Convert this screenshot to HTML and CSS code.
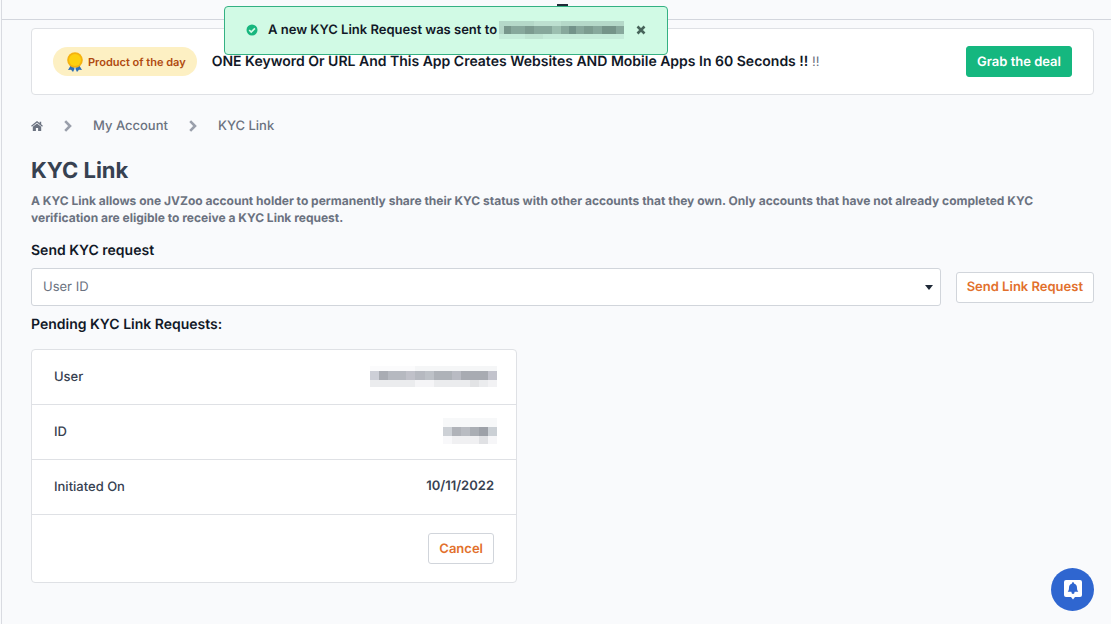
FILE: index.html
```html
<!DOCTYPE html>
<html lang="en">
<head>
    <meta charset="UTF-8">
    <meta name="viewport" content="width=device-width, initial-scale=1.0">
    <title>KYC Link</title>
    <link rel="stylesheet" href="styles.css">
</head>
<body>

    <div class="page">
        <header class="topbar">
            <span class="topbar-handle"></span>
        </header>

        <main class="content">
            <section class="promo">
                <span class="promo-badge">
                    <svg class="medal" width="18" height="20" viewBox="0 0 18 20" aria-hidden="true">
                        <path d="M5 13 L2 18 L5 17.700 L7 20 L9 16 L11 20 L13 17.700 L16 18 L13 13 Z" fill="#2f6fb5"/>
                        <path d="M7 14 L9 18 L11 14 Z" fill="#a9cdf0"/>
                        <circle cx="9" cy="8" r="7.800" fill="#f5b20f"/>
                        <circle cx="9" cy="8" r="6" fill="#fdd00f"/>
                    </svg>
                    Product of the day
                </span>
                <p class="promo-text"><strong>ONE Keyword Or URL And This App Creates Websites AND Mobile Apps In 60 Seconds !!</strong> !!</p>
                <button class="btn btn-green" type="button">Grab the deal</button>
            </section>

            <nav class="breadcrumb" aria-label="Breadcrumb">
                <a href="#" aria-label="Home">
                    <svg class="home" width="12" height="10" viewBox="0 0 12 10" aria-hidden="true">
                        <path d="M0.500 5.200 L6 0.800 L11.500 5.200" fill="none" stroke="currentColor" stroke-width="1.300"/>
                        <path d="M8.600 0.800 H10.200 V4 L8.600 2.700 Z" fill="currentColor"/>
                        <path d="M1.800 5.700 L6 2.400 L10.200 5.700 V10 H7.100 V6.900 H4.900 V10 H1.800 Z" fill="currentColor"/>
                    </svg>
                </a>
                <svg class="chevron" width="8" height="12" viewBox="0 0 8 12" aria-hidden="true">
                    <path d="M1.200 1.200 L6 6 L1.200 10.800" fill="none" stroke="currentColor" stroke-width="2.600"/>
                </svg>
                <a href="#">My Account</a>
                <svg class="chevron" width="8" height="12" viewBox="0 0 8 12" aria-hidden="true">
                    <path d="M1.200 1.200 L6 6 L1.200 10.800" fill="none" stroke="currentColor" stroke-width="2.600"/>
                </svg>
                <a href="#">KYC Link</a>
            </nav>

            <h1>KYC Link</h1>
            <p class="intro">A KYC Link allows one JVZoo account holder to permanently share their KYC status with other accounts that they own. Only accounts that have not already completed KYC verification are eligible to receive a KYC Link request.</p>

            <form class="request-form">
                <label class="section-title" for="user-id">Send KYC request</label>
                <div class="form-row">
                    <div class="select-wrap">
                        <select id="user-id">
                            <option>User ID</option>
                        </select>
                    </div>
                    <button class="btn btn-outline" type="button">Send Link Request</button>
                </div>
            </form>

            <h2 class="section-title">Pending KYC Link Requests:</h2>
            <section class="request-card">
                <table>
                    <tr>
                        <th scope="row">User</th>
                        <td>
                            <svg class="masked" width="127" height="21" viewBox="0 0 127 21" shape-rendering="crispEdges" aria-label="Hidden user">
                                <rect width="127" height="5" fill="#fbfbfc"/>
                                <rect x="45" width="82" height="5" fill="#f5f6f7"/>
                                <rect y="5" width="127" height="9" fill="#b6b9c0"/>
                                <rect y="5" width="9" height="9" fill="#cdcfd7"/>
                                <rect x="9" y="5" width="9" height="9" fill="#a9acb3"/>
                                <rect x="36" y="5" width="9" height="9" fill="#c0c1c9"/>
                                <rect x="55" y="5" width="9" height="9" fill="#bdc1c7"/>
                                <rect x="64" y="5" width="18" height="9" fill="#aeb2b8"/>
                                <rect x="82" y="5" width="9" height="9" fill="#b9bbc3"/>
                                <rect x="91" y="5" width="27" height="9" fill="#a8abb2"/>
                                <rect x="118" y="5" width="9" height="9" fill="#c2c3cc"/>
                                <rect y="14" width="127" height="7" fill="#ebecee"/>
                                <rect x="45" y="14" width="19" height="7" fill="#f5f5f7"/>
                                <rect x="100" y="14" width="9" height="7" fill="#e2e3e5"/>
                                <rect x="118" y="14" width="9" height="7" fill="#f2f2f4"/>
                            </svg>
                        </td>
                    </tr>
                    <tr>
                        <th scope="row">ID</th>
                        <td>
                            <svg class="masked" width="54" height="26" viewBox="0 0 54 26" shape-rendering="crispEdges" aria-label="Hidden ID">
                                <rect width="54" height="9" fill="#f7f8f9"/>
                                <rect y="9" width="9" height="9" fill="#cdd1d6"/>
                                <rect x="9" y="9" width="9" height="9" fill="#b0b3b9"/>
                                <rect x="18" y="9" width="9" height="9" fill="#b9bcc2"/>
                                <rect x="27" y="9" width="9" height="9" fill="#aaaeb4"/>
                                <rect x="36" y="9" width="9" height="9" fill="#9da1a8"/>
                                <rect x="45" y="9" width="9" height="9" fill="#cbd0d5"/>
                                <rect y="18" width="54" height="8" fill="#f0f0f2"/>
                                <rect y="18" width="9" height="8" fill="#f8f8fa"/>
                                <rect x="36" y="18" width="9" height="8" fill="#e0e1e4"/>
                                <rect x="45" y="18" width="9" height="8" fill="#f6f6f8"/>
                            </svg>
                        </td>
                    </tr>
                    <tr>
                        <th scope="row">Initiated On</th>
                        <td class="date">10/11/2022</td>
                    </tr>
                </table>
                <div class="card-footer">
                    <button class="btn btn-outline" type="button">Cancel</button>
                </div>
            </section>
        </main>
    </div>

    <div class="toast" role="status">
        <svg class="toast-icon" width="12" height="12" viewBox="0 0 12 12" aria-hidden="true">
            <circle cx="6" cy="6" r="5.500" fill="#17b67e"/>
            <path d="M3.200 6 L5.200 8 L8.900 4.300" fill="none" stroke="#d1fae5" stroke-width="1.700"/>
        </svg>
        <span>A new KYC Link Request was sent to</span>
        <svg class="toast-name" width="125" height="18" viewBox="0 0 125 18" shape-rendering="crispEdges" aria-label="Hidden user">
            <rect width="125" height="5" fill="#b5d9c9"/>
            <rect x="35" width="27" height="5" fill="#bde0d0"/>
            <rect y="5" width="125" height="8" fill="#87a89c"/>
            <rect y="5" width="5" height="8" fill="#b4d6c7"/>
            <rect x="5" y="5" width="7" height="8" fill="#78978c"/>
            <rect x="26" y="5" width="9" height="8" fill="#7c9b90"/>
            <rect x="53" y="5" width="9" height="8" fill="#9cbfb0"/>
            <rect x="70" y="5" width="7" height="8" fill="#73938a"/>
            <rect x="85" y="5" width="9" height="8" fill="#7c9c90"/>
            <rect x="103" y="5" width="14" height="8" fill="#759489"/>
            <rect y="13" width="125" height="5" fill="#c5ecda"/>
            <rect x="26" y="13" width="18" height="5" fill="#bfe5d3"/>
        </svg>
        <button class="toast-close" type="button" aria-label="Close">
            <svg width="10" height="10" viewBox="0 0 10 10" aria-hidden="true">
                <path d="M1.500 1.500 L8.500 8.500 M8.500 1.500 L1.500 8.500" stroke="#47645a" stroke-width="2.600"/>
            </svg>
        </button>
    </div>

    <button class="notify" type="button" aria-label="Notifications">
        <svg width="18" height="20" viewBox="0 0 18 20" aria-hidden="true">
            <path d="M2 0 H16 Q18 0 18 2 V15 Q18 17 16 17 H11 L9 19.500 L7 17 H2 Q0 17 0 15 V2 Q0 0 2 0 Z" fill="#fff"/>
            <path d="M9 2.300 C9.800 2.300 10 2.900 10 3.400 C12.300 4 13 5.700 13 7.800 C13 10 13.600 10.700 14.300 11.800 H3.700 C4.400 10.700 5 10 5 7.800 C5 5.700 5.700 4 8 3.400 C8 2.900 8.200 2.300 9 2.300 Z M7.300 11.500 H10.700 Q10.500 14 9 14 Q7.500 14 7.300 11.500 Z" fill="#2f66d0"/>
        </svg>
    </button>

</body>
</html>
```

FILE: styles.css
```css
* {
    box-sizing: border-box;
}

body {
    margin: 0;
    background: #f9fafc;
    font-family: Inter, "Liberation Sans", sans-serif;
    font-size: 13px;
    line-height: 18px;
    color: #374151;
    text-rendering: geometricPrecision;
}

h1, h2, p {
    margin: 0;
}

.page {
    min-height: 100vh;
    margin-left: 1px;
    border-left: 1px solid #d9dbe1;
}

.topbar {
    height: 20px;
    padding: 4px 0 0 12px;
    border-bottom: 1px solid #d3d6dd;
}

.topbar-handle {
    display: block;
    width: 11px;
    height: 2px;
    margin: 0 auto;
    background: #1f2937;
}

.content {
    padding: 8px 17px 40px 29px;
}

/* promo banner */
.promo {
    display: flex;
    align-items: center;
    gap: 15px;
    padding: 17px 21px;
    background: #fff;
    border: 1px solid #dfe1e5;
    border-radius: 4px;
}

.promo-badge {
    display: flex;
    align-items: center;
    gap: 4px;
    height: 29px;
    padding: 0 11px 0 13px;
    border-radius: 15px;
    background: #fdf0c3;
    color: #b04a10;
    font-size: 11px;
    font-weight: 600;
    white-space: nowrap;
}

.promo-text {
    flex: 1;
    color: #6b7280;
}

.promo-text strong {
    color: #111827;
    font-size: 14px;
    font-weight: 600;
}

/* buttons */
.btn {
    height: 31px;
    padding: 0 10px;
    border: 1px solid #d1d5db;
    border-radius: 3px;
    font-family: inherit;
    font-size: 13px;
    font-weight: 600;
    line-height: 18px;
    text-rendering: inherit;
    white-space: nowrap;
    cursor: pointer;
}

.btn-green {
    border-color: #15b77f;
    background: #15b77f;
    color: #fff;
}

.btn-outline {
    background: #fff;
    color: #e2702c;
}

/* breadcrumb */
.breadcrumb {
    display: flex;
    align-items: center;
    gap: 21px;
    margin-top: 22px;
    color: #6b7280;
    font-weight: 500;
}

.breadcrumb a {
    color: inherit;
    text-decoration: none;
}

.home {
    display: block;
}

.chevron {
    color: #9a9fab;
}

h1 {
    margin-top: 22px;
    color: #374151;
    font-size: 22px;
    font-weight: 700;
    line-height: 28px;
}

.intro {
    margin-top: 7px;
    color: #6b7280;
    font-size: 12px;
    font-weight: 700;
    line-height: 17px;
}

.section-title {
    display: block;
    color: #111827;
    font-size: 14px;
    font-weight: 600;
    line-height: 20px;
}

/* request form */
.request-form {
    margin: 15px 0 9px;
}

.form-row {
    display: flex;
    align-items: center;
    gap: 15px;
    margin-top: 7px;
}

.select-wrap {
    position: relative;
    flex: 1;
}

.select-wrap::after {
    content: "";
    position: absolute;
    top: 17px;
    right: 8px;
    border: 4px solid transparent;
    border-top: 5px solid #1f2937;
    border-bottom: 0;
    pointer-events: none;
}

select {
    display: block;
    width: 100%;
    height: 38px;
    padding: 0 24px 0 11px;
    appearance: none;
    border: 1px solid #d1d5db;
    border-radius: 3px;
    background: #fff;
    color: #6b7280;
    font-family: inherit;
    font-size: 13px;
    text-rendering: inherit;
}

/* pending request */
.request-card {
    max-width: 486px;
    margin-top: 14px;
    background: #fff;
    border: 1px solid #dfe1e5;
    border-radius: 4px;
}

table {
    width: 100%;
    border-collapse: separate;
    border-spacing: 0;
}

th, td {
    height: 55px;
    padding: 0 22px;
    border-bottom: 1px solid #dfe1e5;
    font-weight: 500;
    text-align: left;
}

td {
    padding-right: 19px;
    padding-bottom: 2px;
    text-align: right;
}

.date {
    padding-right: 22px;
    font-weight: 600;
}

.masked {
    display: block;
    margin-left: auto;
}

.card-footer {
    display: flex;
    justify-content: flex-end;
    padding: 18px 22px;
}

/* success message */
.toast {
    position: fixed;
    top: 6px;
    left: 224px;
    display: flex;
    align-items: center;
    height: 49px;
    padding: 0 21px 2px;
    background: #d1fae5;
    border: 1px solid #34b183;
    border-radius: 4px;
    color: #111827;
    font-size: 13px;
    font-weight: 600;
    white-space: nowrap;
}

.toast-icon {
    margin-right: 10px;
}

.toast-name {
    margin: 0 12px 0 2px;
}

.toast-close {
    display: flex;
    padding: 0;
    border: 0;
    background: none;
    cursor: pointer;
}

/* notification bubble */
.notify {
    position: fixed;
    right: 17px;
    bottom: 13px;
    display: flex;
    align-items: center;
    justify-content: center;
    width: 43px;
    height: 43px;
    padding: 0;
    border: 0;
    border-radius: 50%;
    background: #2f66d0;
    cursor: pointer;
}
```
